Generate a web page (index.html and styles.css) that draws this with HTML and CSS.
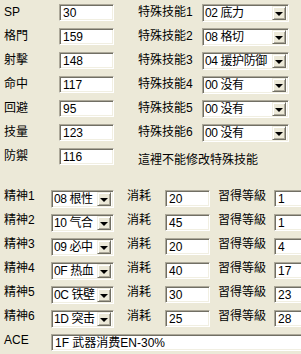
FILE: index.html
```html
<!DOCTYPE html>
<html>
<head>
<meta charset="utf-8">
<link rel="stylesheet" href="styles.css">
</head>
<body>
<div class="top">
  <div class="row"><span class="lbl">SP</span><div class="inp w55">30</div><span class="lbl2">特殊技能1</span><div class="combo wide"><span class="ct">02 底力</span><i class="btn"><b class="tri"></b></i></div></div>
  <div class="row"><span class="lbl">格門</span><div class="inp w55">159</div><span class="lbl2">特殊技能2</span><div class="combo wide"><span class="ct">08 格切</span><i class="btn"><b class="tri"></b></i></div></div>
  <div class="row"><span class="lbl">射擊</span><div class="inp w55">148</div><span class="lbl2">特殊技能3</span><div class="combo wide"><span class="ct">04 援护防御</span><i class="btn"><b class="tri"></b></i></div></div>
  <div class="row"><span class="lbl">命中</span><div class="inp w55">117</div><span class="lbl2">特殊技能4</span><div class="combo wide"><span class="ct">00 没有</span><i class="btn"><b class="tri"></b></i></div></div>
  <div class="row"><span class="lbl">回避</span><div class="inp w55">95</div><span class="lbl2">特殊技能5</span><div class="combo wide"><span class="ct">00 没有</span><i class="btn"><b class="tri"></b></i></div></div>
  <div class="row"><span class="lbl">技量</span><div class="inp w55">123</div><span class="lbl2">特殊技能6</span><div class="combo wide"><span class="ct">00 没有</span><i class="btn"><b class="tri"></b></i></div></div>
  <div class="row"><span class="lbl">防禦</span><div class="inp w55">116</div><span class="note">這裡不能修改特殊技能</span></div>
</div>
<div class="bottom">
  <div class="brow"><span class="blbl">精神1</span><div class="combo narrow"><span class="ct">08 根性</span><i class="btn"><b class="tri"></b></i></div><span class="clbl">消耗</span><div class="inp cost">20</div><span class="llbl">習得等級</span><div class="inp lvl">1</div></div>
  <div class="brow"><span class="blbl">精神2</span><div class="combo narrow"><span class="ct">10 气合</span><i class="btn"><b class="tri"></b></i></div><span class="clbl">消耗</span><div class="inp cost">45</div><span class="llbl">習得等級</span><div class="inp lvl">1</div></div>
  <div class="brow"><span class="blbl">精神3</span><div class="combo narrow"><span class="ct">09 必中</span><i class="btn"><b class="tri"></b></i></div><span class="clbl">消耗</span><div class="inp cost">20</div><span class="llbl">習得等級</span><div class="inp lvl">4</div></div>
  <div class="brow"><span class="blbl">精神4</span><div class="combo narrow"><span class="ct">0F 热血</span><i class="btn"><b class="tri"></b></i></div><span class="clbl">消耗</span><div class="inp cost">40</div><span class="llbl">習得等級</span><div class="inp lvl">17</div></div>
  <div class="brow"><span class="blbl">精神5</span><div class="combo narrow"><span class="ct">0C 铁壁</span><i class="btn"><b class="tri"></b></i></div><span class="clbl">消耗</span><div class="inp cost">30</div><span class="llbl">習得等級</span><div class="inp lvl">23</div></div>
  <div class="brow"><span class="blbl">精神6</span><div class="combo narrow"><span class="ct">1D 突击</span><i class="btn"><b class="tri"></b></i></div><span class="clbl">消耗</span><div class="inp cost">25</div><span class="llbl">習得等級</span><div class="inp lvl">28</div></div>
  <div class="brow"><span class="blbl">ACE</span><div class="inp ace">1F 武器消费EN-30%</div></div>
</div>
</body>
</html>
```
FILE: styles.css
```css
html, body {
  margin: 0;
  padding: 0;
  background: #ECE9D8;
  overflow: hidden;
}
body {
  width: 301px;
  height: 354px;
  font-family: "Liberation Sans", "Noto Sans CJK SC", sans-serif;
  font-size: 12px;
  color: #000;
}
.top {
  padding-top: 4px;
  padding-left: 4px;
}
.row {
  display: flex;
  align-items: flex-start;
  height: 24px;
}
.lbl {
  width: 55px;
  line-height: 17px;
  flex: none;
}
.lbl2 {
  margin-left: 24px;
  width: 64px;
  line-height: 17px;
  flex: none;
}
.note {
  margin-left: 24px;
  line-height: 17px;
  padding-top: 4px;
  white-space: nowrap;
}
.inp {
  box-sizing: border-box;
  height: 17px;
  background: #fff;
  border: 1px solid;
  border-color: #ACA899 #FFFFFF #FFFFFF #ACA899;
  box-shadow: inset 1px 1px 0 #716F64, inset -1px -1px 0 #F1EFE2;
  padding: 1px 0 0 3px;
  line-height: 14px;
  white-space: nowrap;
  overflow: hidden;
  flex: none;
}
.w55 { width: 55px; }
.combo {
  box-sizing: border-box;
  height: 18px;
  background: #fff;
  border: 1px solid;
  border-color: #ACA899 #FFFFFF #FFFFFF #ACA899;
  box-shadow: inset 1px 1px 0 #716F64, inset -1px -1px 0 #F1EFE2;
  display: flex;
  align-items: center;
  justify-content: space-between;
  padding: 2px 2px 2px 2px;
  flex: none;
  overflow: hidden;
}
.combo.wide { width: 87px; }
.combo.narrow { width: 63px; }
.ct {
  white-space: nowrap;
  line-height: 14px;
  letter-spacing: -0.4px;
}
.btn {
  box-sizing: border-box;
  width: 14px;
  height: 14px;
  background: #ECE9D8;
  border: 1px solid;
  border-color: #F1EFE2 #716F64 #716F64 #F1EFE2;
  box-shadow: inset 1px 1px 0 #FFFFFF, inset -1px -1px 0 #ACA899;
  display: flex;
  align-items: center;
  justify-content: center;
  flex: none;
}
.tri {
  width: 0;
  height: 0;
  border-left: 4px solid transparent;
  border-right: 4px solid transparent;
  border-top: 4px solid #000;
  margin-top: 1px;
}
.bottom {
  margin-top: 18px;
  padding-left: 4px;
}
.brow {
  display: flex;
  align-items: flex-start;
  height: 24px;
}
.blbl {
  width: 47px;
  line-height: 13px;
  flex: none;
}
.clbl {
  margin-left: 13px;
  width: 38px;
  line-height: 13px;
  flex: none;
}
.llbl {
  margin-left: 8px;
  width: 56px;
  line-height: 13px;
  flex: none;
}
.cost { width: 45px; }
.lvl { width: 40px; }
.ace { width: 260px; }
```
